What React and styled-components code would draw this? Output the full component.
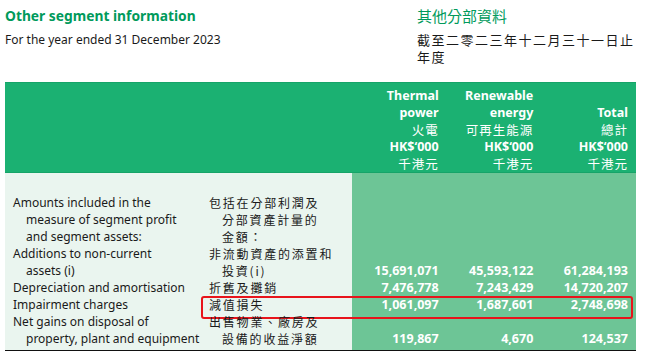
import React from "react"
import styled, { createGlobalStyle } from "styled-components"

const GlobalStyle = createGlobalStyle`
  body {
    margin: 0;
    background: #ffffff;
    font-family: "Noto Sans", "Noto Sans CJK TC", sans-serif;
    color: #1a1a1a;
  }
`

const Page = styled.div`
  width: 656px;
  height: 353px;
  overflow: hidden;
  padding: 5px 0 0 5px;
  box-sizing: border-box;
`

// Cabeçalho com títulos em inglês e chinês
const TopHeader = styled.div`
  display: grid;
  grid-template-columns: 412px 224px;
  height: 77px;
`

const Bloco = styled.div`
  display: flex;
  flex-direction: column;
  align-items: flex-start;
`

const Titulo = styled.div`
  font-size: ${(p) => (p.$cjk ? "15px" : "13.8px")};
  color: #009a5b;
  line-height: 22px;
  font-family: ${(p) => (p.$cjk ? `"Noto Sans CJK TC", sans-serif` : `"Noto Sans", sans-serif`)};
  font-weight: ${(p) => (p.$cjk ? 400 : 700)};
`

const SubTitulo = styled.div`
  margin-top: 4px;
  font-size: ${(p) => (p.$cjk ? "13px" : "12px")};
  line-height: 17px;
  font-family: ${(p) => (p.$cjk ? `"Noto Sans CJK TC", sans-serif` : `"Noto Sans", sans-serif`)};
  letter-spacing: ${(p) => (p.$cjk ? "1.5px" : "0")};
  width: ${(p) => (p.$cjk ? "224px" : "auto")};
`

const Tabela = styled.div`
  width: 631px;
  position: relative;
  border-bottom: 1px solid #111;
`

const Linha = styled.div`
  display: grid;
  grid-template-columns: 200px 147px repeat(3, 94.67px);
  position: relative;
`

const Faixa = styled(Linha)`
  background: #1bb172;
  border-top: 1px solid #16a468;
  border-bottom: 1px solid #16a468;
  height: 91px;
  box-sizing: border-box;
  padding-top: 2px;
`

const Corpo = styled.div`
  position: relative;
  padding-top: 21px;
  padding-bottom: 3px;
  background: linear-gradient(to right, #eaf5ef 0, #eaf5ef 347px, #6dc596 347px, #6dc596 100%);
`

const CelulaTopo = styled.div`
  text-align: right;
  padding-right: 8px;
  color: #ffffff;
  font-size: 12.5px;
  line-height: 17px;
  display: flex;
  flex-direction: column;
  justify-content: flex-end;
`

const Negrito = styled.span`
  font-weight: 700;
  display: block;
`

const Chines = styled.span`
  display: block;
  font-family: "Noto Sans CJK TC", sans-serif;
  letter-spacing: 1px;
`

const Rotulo = styled.div`
  padding-left: ${(p) => (p.$cjk ? "4px" : "8px")};
  font-size: 12px;
  line-height: 17px;
  white-space: nowrap;
  font-family: ${(p) => (p.$cjk ? `"Noto Sans CJK TC", sans-serif` : `"Noto Sans", sans-serif`)};
  letter-spacing: ${(p) => (p.$cjk ? "1.8px" : "0")};
  color: #1a1a1a;
`

const Primeira = styled.span`
  display: block;
`

const Recuo = styled.span`
  display: block;
  padding-left: 13px;
`

const Numero = styled.div`
  text-align: right;
  padding-right: 8px;
  font-size: 12.5px;
  line-height: 17px;
  font-weight: 700;
  color: #ffffff;
  align-self: end;
`

// caixa vermelha que destaca a linha de perdas por imparidade
const Destaque = styled.div`
  position: absolute;
  left: 196px;
  right: 3px;
  top: 0px;
  height: 23px;
  border: 2px solid #e8141b;
  border-radius: 3px;
  box-sizing: border-box;
  pointer-events: none;
`

const linhas = [
  {
    en: ["Amounts included in the", "measure of segment profit", "and segment assets:"],
    zh: ["包括在分部利潤及", "分部資產計量的", "金額："],
    valores: null,
  },
  {
    en: ["Additions to non-current", "assets (i)"],
    zh: ["非流動資產的添置和", "投資(i)"],
    valores: ["15,691,071", "45,593,122", "61,284,193"],
  },
  {
    en: ["Depreciation and amortisation"],
    zh: ["折舊及攤銷"],
    valores: ["7,476,778", "7,243,429", "14,720,207"],
  },
  {
    en: ["Impairment charges"],
    zh: ["減值損失"],
    valores: ["1,061,097", "1,687,601", "2,748,698"],
    destaque: true,
  },
  {
    en: ["Net gains on disposal of", "property, plant and equipment"],
    zh: ["出售物業、廠房及", "設備的收益淨額"],
    valores: ["119,867", "4,670", "124,537"],
  },
]

function Texto({ partes }) {
  return partes.map((t, i) => (i === 0 ? <Primeira key={i}>{t}</Primeira> : <Recuo key={i}>{t}</Recuo>))
}

export default function App() {
  return (
    <Page>
      <GlobalStyle />
      <TopHeader>
        <Bloco>
          <Titulo>Other segment information</Titulo>
          <SubTitulo>For the year ended 31 December 2023</SubTitulo>
        </Bloco>
        <Bloco>
          <Titulo $cjk>其他分部資料</Titulo>
          <SubTitulo $cjk>截至二零二三年十二月三十一日止年度</SubTitulo>
        </Bloco>
      </TopHeader>
      <Tabela>
        <Faixa>
          <div />
          <div />
          <CelulaTopo>
            <Negrito>Thermal</Negrito>
            <Negrito>power</Negrito>
            <Chines>火電</Chines>
            <Negrito>HK$‘000</Negrito>
            <Chines>千港元</Chines>
          </CelulaTopo>
          <CelulaTopo>
            <Negrito>Renewable</Negrito>
            <Negrito>energy</Negrito>
            <Chines>可再生能源</Chines>
            <Negrito>HK$‘000</Negrito>
            <Chines>千港元</Chines>
          </CelulaTopo>
          <CelulaTopo>
            <Negrito>Total</Negrito>
            <Chines>總計</Chines>
            <Negrito>HK$‘000</Negrito>
            <Chines>千港元</Chines>
          </CelulaTopo>
        </Faixa>
        <Corpo>
          {linhas.map((l, i) => (
            <Linha key={i}>
              <Rotulo>
                <Texto partes={l.en} />
              </Rotulo>
              <Rotulo $cjk>
                <Texto partes={l.zh} />
              </Rotulo>
              {l.valores ? l.valores.map((v, j) => <Numero key={j}>{v}</Numero>) : [0, 1, 2].map((j) => <div key={j} />)}
              {l.destaque && <Destaque />}
            </Linha>
          ))}
        </Corpo>
      </Tabela>
    </Page>
  )
}
